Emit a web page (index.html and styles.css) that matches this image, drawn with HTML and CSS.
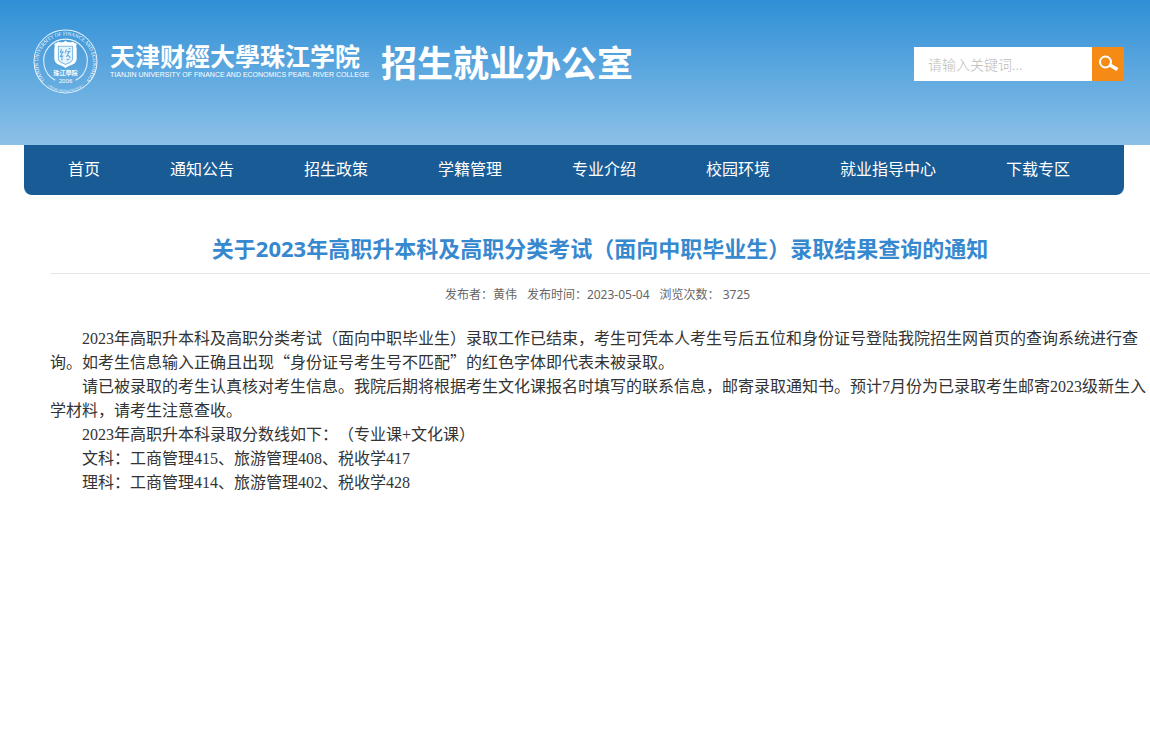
FILE: index.html
```html
<!DOCTYPE html>
<html lang="zh-CN">
<head>
<meta charset="utf-8">
<title>招生就业办公室</title>
<link rel="stylesheet" href="styles.css">
</head>
<body>
<header class="header">
  <div class="brand">
    <svg class="seal" viewBox="0 0 64 64" aria-hidden="true">
      <defs>
        <path id="arc-top" d="M12.2 51.5A27 27 0 1 1 51.8 51.5"/>
        <path id="arc-bottom" d="M13 55A29.5 29.5 0 0 0 51 55"/>
      </defs>
      <circle class="seal-line" cx="32" cy="32" r="31"/>
      <path class="seal-line" d="M22 50.500A21.500 21.500 0 1 1 42 50.500"/>
      <text class="seal-ring"><textPath href="#arc-top" startOffset="50%" text-anchor="middle">TIANJIN UNIVERSITY OF FINANCE AND ECONOMICS</textPath></text>
      <text class="seal-ring-small"><textPath href="#arc-bottom" startOffset="50%" text-anchor="middle">• PEARL RIVER COLLEGE •</textPath></text>
      <path class="seal-fill" d="M21 14.500Q23 14 25 12.500Q29 14 32 11.500Q35 14 39 12.500Q41 14 43 14.500Q42 17 43 20V29Q43 33 39 35Q34 36.500 32 38.500Q30 36.500 25 35Q21 33 21 29V20Q22 17 21 14.500Z"/>
      <path class="seal-shield" d="M25 17H39V29Q39 31.500 36 33L32 35L28 33Q25 31.500 25 29Z"/>
      <path class="seal-mark" d="M28 19.500L27 23L29.500 22.500L27 27L30 26.500M28.500 27V31M33 20L31.500 24M35 19.500H37M33.500 22.500L37 22M35.500 22.500L33 27.500M34.500 26L37 28.500M33 30.500L36 29.500"/>
      <text class="seal-name" x="32" y="45" text-anchor="middle">珠江學院</text>
      <text class="seal-year" x="32" y="53" text-anchor="middle">2006</text>
    </svg>
    <div class="school">
      <span class="school-cn">天津财經大學珠江学院</span>
      <span class="school-en">TIANJIN UNIVERSITY OF FINANCE AND ECONOMICS PEARL RIVER COLLEGE</span>
    </div>
    <h1 class="office">招生就业办公室</h1>
  </div>
  <form class="search" role="search">
    <input class="search-input" type="text" aria-label="关键词" placeholder="请输入关键词...">
    <button class="search-button" type="submit" aria-label="搜索">
      <svg class="search-icon" viewBox="0 0 32 34" aria-hidden="true">
        <circle cx="13.500" cy="15" r="5.500" fill="none" stroke="#fff" stroke-width="2"/>
        <path d="M17 17.500L25.500 22.500" stroke="#fff" stroke-width="3.500"/>
      </svg>
    </button>
  </form>
</header>
<nav class="nav">
  <a class="nav-link" href="#">首页</a>
  <a class="nav-link" href="#">通知公告</a>
  <a class="nav-link" href="#">招生政策</a>
  <a class="nav-link" href="#">学籍管理</a>
  <a class="nav-link" href="#">专业介绍</a>
  <a class="nav-link" href="#">校园环境</a>
  <a class="nav-link" href="#">就业指导中心</a>
  <a class="nav-link" href="#">下载专区</a>
</nav>
<main class="article">
  <h2 class="article-title">关于2023年高职升本科及高职分类考试（面向中职毕业生）录取结果查询的通知</h2>
  <div class="article-meta">
    <span>发布者：黄伟</span>
    <span>发布时间：2023-05-04</span>
    <span>浏览次数： 3725</span>
  </div>
  <div class="article-body">
    <p>2023年高职升本科及高职分类考试（面向中职毕业生）录取工作已结束，考生可凭本人考生号后五位和身份证号登陆我院招生网首页的查询系统进行查询。如考生信息输入正确且出现<span class="cjk-quote">“</span>身份证号考生号不匹配<span class="cjk-quote">”</span>的红色字体即代表未被录取。</p>
    <p>请已被录取的考生认真核对考生信息。我院后期将根据考生文化课报名时填写的联系信息，邮寄录取通知书。预计7月份为已录取考生邮寄2023级新生入学材料，请考生注意查收。</p>
    <p>2023年高职升本科录取分数线如下：（专业课+文化课）</p>
    <p>文科：工商管理415、旅游管理408、税收学417</p>
    <p>理科：工商管理414、旅游管理402、税收学428</p>
  </div>
</main>
</body>
</html>
```
FILE: styles.css
```css
* {
  box-sizing: border-box;
}

body {
  margin: 0;
  background: #fff;
  color: #333;
  font-family: "Noto Sans", "Noto Sans CJK SC", sans-serif;
  text-spacing-trim: space-all;
}

.header {
  display: flex;
  justify-content: space-between;
  align-items: flex-start;
  min-height: 145px;
  padding: 29px 26px 0 33px;
  background: linear-gradient(#2f8fd6, #8cc1e8);
}

.brand {
  display: flex;
  align-items: flex-start;
  color: #fff;
}

.seal {
  width: 65px;
  height: 65px;
}

.seal-line {
  fill: none;
  stroke: #e4f2fc;
  stroke-width: 1;
}

.seal text {
  fill: #fff;
}

.seal-ring {
  font: 5px "Liberation Serif", serif;
}

.seal-ring-small {
  font: 3px "Liberation Serif", serif;
}

.seal-fill {
  fill: #fff;
}

.seal-shield {
  fill: #e8f4fd;
  stroke: #7dbae6;
  stroke-width: 1;
}

.seal-mark {
  fill: none;
  stroke: #5ba6de;
  stroke-width: 1;
}

.seal-name {
  font: bold 6px "Noto Sans CJK SC", sans-serif;
}

.seal-year {
  font: 6px "Liberation Sans", sans-serif;
}

.school {
  display: flex;
  flex-direction: column;
  margin: 13px 0 0 12px;
  white-space: nowrap;
}

.school-cn {
  font: bold 25px/26px "Noto Sans CJK SC", sans-serif;
}

.school-en {
  font: 7px/14px "Liberation Sans Narrow", "Liberation Sans", sans-serif;
}

.office {
  margin: 6px 0 0 12px;
  font: bold 36px/52px "Noto Sans CJK SC", sans-serif;
  white-space: nowrap;
}

.search {
  display: flex;
  height: 34px;
  margin-top: 18px;
}

.search-input {
  width: 178px;
  padding: 0 14px;
  border: 0;
  background: #fff;
  color: #333;
  font: 14px "Noto Sans CJK SC", sans-serif;
}

.search-input::placeholder {
  color: #bbb;
  font-weight: 300;
}

.search-button {
  width: 32px;
  padding: 0;
  border: 0;
  background: #f58a14;
}

.search-icon {
  display: block;
  width: 100%;
}

.nav {
  display: flex;
  gap: 70px;
  margin: 0 26px 0 24px;
  padding: 0 44px 4px;
  border-radius: 0 0 8px 8px;
  background: #195b95;
}

.nav-link {
  color: #fff;
  font: 16px/46px "Noto Sans CJK SC", sans-serif;
  text-decoration: none;
  white-space: nowrap;
}

.article {
  margin: 29px 0 0 50px;
}

.article-title {
  margin: 0;
  padding-bottom: 1px;
  border-bottom: 1px solid #e6e6e6;
  color: #3688cf;
  font-size: 22px;
  line-height: 48px;
  text-align: center;
}

.article-meta {
  display: flex;
  justify-content: center;
  gap: 10px;
  padding: 12px 5px 0 0;
  color: #666;
  font-size: 12px;
  line-height: 18px;
}

.article-body {
  margin-top: 23px;
  font: 16px/24px "Liberation Serif", "Noto Sans CJK SC", serif;
}

.article-body p {
  margin: 0;
  text-indent: 32px;
}

.cjk-quote {
  font-family: "Noto Sans CJK SC", sans-serif;
  line-height: 1;
}
```
